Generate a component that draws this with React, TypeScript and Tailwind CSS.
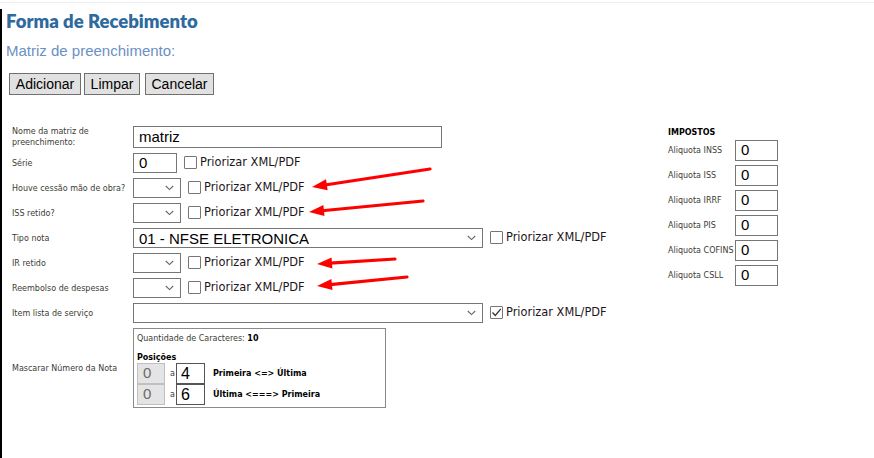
import React from 'react';

const label = "font-['DejaVu_Sans',sans-serif] text-[8px] text-[#3c3c34]";
const prio = "font-['DejaVu_Sans',sans-serif] text-[11.4px] text-[#1e1420]";

const Checkbox = ({ checked = false }: { checked?: boolean }) => (
  <span className="w-[13px] h-[13px] border border-[#767676] bg-white rounded-[1px] flex items-center justify-center shrink-0">
    {checked && (
      <svg width="11" height="11" viewBox="0 0 11 11">
        <path d="M1.5 5.5 L4.3 8.5 L9.8 1.8" fill="none" stroke="#333" strokeWidth="1.3" />
      </svg>
    )}
  </span>
);

const Prioriza = ({ checked = false }: { checked?: boolean }) => (
  <div className="flex items-center gap-[3px] ml-[7px]">
    <Checkbox checked={checked} />
    <span className={prio}>Priorizar XML/PDF</span>
  </div>
);

const Select = ({ w, text }: { w: string; text?: string }) => (
  <div className={`${w} h-[20px] border border-[#767676] bg-white flex items-center pl-[5px] pr-[6px]`}>
    <span className="flex-1 font-['Liberation_Sans',sans-serif] text-[15px] text-black leading-none">{text}</span>
    <svg width="9" height="6" viewBox="0 0 9 6">
      <path d="M0.8 1 L4.5 4.6 L8.2 1" fill="none" stroke="#666" strokeWidth="1.1" />
    </svg>
  </div>
);

const Row = ({ title, h = 'h-[20px]', children }: { title: React.ReactNode; h?: string; children?: React.ReactNode }) => (
  <div className={`flex items-center ${h}`}>
    <div className={`w-[122px] shrink-0 ${label} leading-[11px] pl-[1px]`}>{title}</div>
    {children}
  </div>
);

const Arrow = ({ x1, y1, x2, y2 }: { x1: number; y1: number; x2: number; y2: number }) => {
  const dx = x2 - x1;
  const dy = y2 - y1;
  const len = Math.sqrt(dx * dx + dy * dy);
  const ux = dx / len;
  const uy = dy / len;
  const bx = x2 - ux * 15;
  const by = y2 - uy * 15;
  const px = -uy * 5.5;
  const py = ux * 5.5;
  return (
    <g>
      <line x1={x1} y1={y1} x2={bx + ux * 2} y2={by + uy * 2} stroke="#ff0000" strokeWidth="3.2" strokeLinecap="round" />
      <polygon points={`${x2},${y2} ${bx + px},${by + py} ${bx - px},${by - py}`} fill="#ff0000" />
    </g>
  );
};

const taxes = ['INSS', 'ISS', 'IRRF', 'PIS', 'COFINS', 'CSLL'];
const buttons: [string, string][] = [
  ['Adicionar', 'w-[72px]'],
  ['Limpar', 'w-[56px]'],
  ['Cancelar', 'w-[69px] ml-[2px]'],
];

export default function App() {
  return (
    <div className="w-[874px] h-[458px] bg-white relative overflow-hidden">
      <div className="h-[3px] border-b border-[#eeeeee]" />
      <div className="mt-[6px] h-[449px] border-l-2 border-black pl-[4px]">
        <h1 className="font-['Lato',sans-serif] font-extrabold text-[18.5px] leading-[24px] text-[#2e6a9e]">Forma de Recebimento</h1>
        <div className="mt-[9px] font-['Liberation_Sans',sans-serif] text-[15px] leading-[18px] text-[#6b90c4]">Matriz de preenchimento:</div>
        <div className="mt-[13px] ml-[3px] flex gap-[3px]">
          {buttons.map(([b, w]) => (
            <button
              key={b}
              className={`${w} h-[22px] border border-[#707070] bg-[#e1e1e1] font-['Liberation_Sans',sans-serif] text-[14px] text-black leading-none`}
            >
              {b}
            </button>
          ))}
        </div>

        <div className="mt-[31px] flex">
          <div className="w-[662px] pl-[5px] flex flex-col gap-[5px]">
            <Row title={<>Nome da matriz de<br />preenchimento:</>} h="h-[22px]">
              <div className="w-[309px] h-[22px] border border-[#767676] flex items-center pl-[5px] font-['Liberation_Sans',sans-serif] text-[15px] text-black">matriz</div>
            </Row>
            <Row title="Série">
              <div className="w-[44px] h-[20px] border border-[#767676] flex items-center pl-[5px] font-['Liberation_Sans',sans-serif] text-[15px] text-black">0</div>
              <Prioriza />
            </Row>
            <Row title="Houve cessão mão de obra?">
              <Select w="w-[48px]" />
              <Prioriza />
            </Row>
            <Row title="ISS retido?">
              <Select w="w-[48px]" />
              <Prioriza />
            </Row>
            <Row title="Tipo nota">
              <Select w="w-[350px]" text="01 - NFSE ELETRONICA" />
              <Prioriza />
            </Row>
            <Row title="IR retido">
              <Select w="w-[48px]" />
              <Prioriza />
            </Row>
            <Row title="Reembolso de despesas">
              <Select w="w-[48px]" />
              <Prioriza />
            </Row>
            <Row title="Item lista de serviço">
              <Select w="w-[350px]" />
              <Prioriza checked />
            </Row>
            <Row title="Mascarar Número da Nota" h="h-[80px]">
              <div className="w-[253px] h-[80px] border border-[#8a8a8a] px-[3px] pt-[4px]">
                <div className={`${label} leading-[11px]`}>
                  Quantidade de Caracteres: <b className="text-black">10</b>
                </div>
                <div className={`${label} mt-[8px] font-bold text-black leading-[11px]`}>Posições</div>
                {[
                  ['4', 'Primeira <=> Última'],
                  ['6', 'Última <===> Primeira'],
                ].map(([v, t]) => (
                  <div key={v} className="flex items-center h-[21px]">
                    <div className="w-[28px] h-[21px] border border-[#c0c0c0] bg-[#e4e4e4] flex items-center pl-[5px] font-['Liberation_Sans',sans-serif] text-[15px] text-[#6a6a6a]">0</div>
                    <span className={`${label} ml-[5px] w-[6px]`}>a</span>
                    <div className="w-[29px] h-[21px] border border-[#555] flex items-center pl-[4px] font-['Liberation_Sans',sans-serif] text-[16px] text-black">{v}</div>
                    <span className="ml-[8px] font-['DejaVu_Sans',sans-serif] text-[8px] font-bold text-black">{t}</span>
                  </div>
                ))}
              </div>
            </Row>
          </div>

          <div className="flex flex-col">
            <div className="font-['DejaVu_Sans',sans-serif] text-[8px] font-bold text-black h-[14px] flex items-center">IMPOSTOS</div>
            <div className="flex flex-col gap-[4px]">
              {taxes.map((t) => (
                <div key={t} className="flex items-center h-[21px]">
                  <span className={`${label} w-[67px]`}>Aliquota {t}</span>
                  <div className="w-[43px] h-[21px] border border-[#767676] flex items-center pl-[5px] font-['Liberation_Sans',sans-serif] text-[15px] text-black">0</div>
                </div>
              ))}
            </div>
          </div>
        </div>
      </div>

      <svg className="absolute inset-0 pointer-events-none" width="874" height="458">
        <Arrow x1={430} y1={169} x2={312} y2={187} />
        <Arrow x1={423} y1={201} x2={309} y2={212} />
        <Arrow x1={395} y1={259} x2={317} y2={264} />
        <Arrow x1={407} y1={277} x2={317} y2={286} />
      </svg>
    </div>
  );
}
